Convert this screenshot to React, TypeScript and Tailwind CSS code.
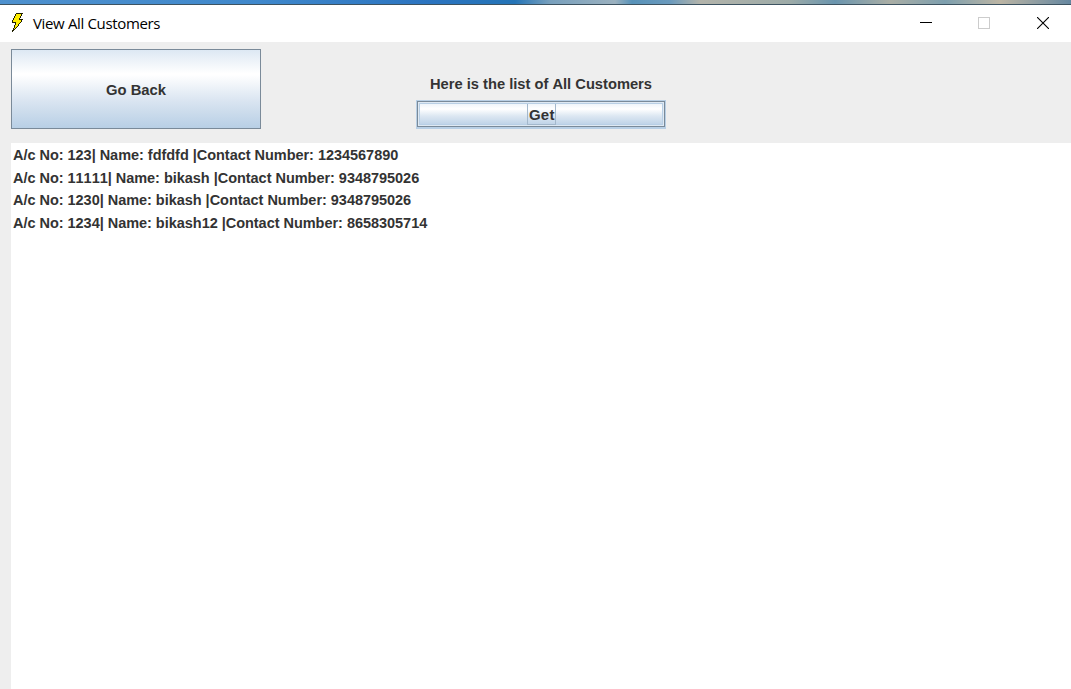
import React from "react";

const customers = [
  { account: "123", name: "fdfdfd", contact: "1234567890", height: "h-[23px]" },
  { account: "11111", name: "bikash", contact: "9348795026", height: "h-[22px]" },
  { account: "1230", name: "bikash", contact: "9348795026", height: "h-[23px]" },
  { account: "1234", name: "bikash12", contact: "8658305714", height: "h-[22px]" },
];

function Bolt() {
  return (
    <svg width="13" height="20" viewBox="0 0 13 20" shapeRendering="crispEdges" className="block">
      <path
        d="M5 1h5v2h-5zM4 3h5v2h-5zM3 5h5v2h-5zM2 7h8v2h-8zM5 9h4v1h-4zM5 10h3v1h-3zM5 11h2v1h-2zM4 12h3v1h-3zM4 13h2v1h-2zM4 14h1v1h-1zM3 15h1v1h-1z"
        fill="#ffed00"
      />
      <path
        d="M5 0h7v1h-7zM4 1h1v2h-1zM10 1h1v2h-1zM3 3h1v2h-1zM9 3h1v2h-1zM2 5h1v2h-1zM8 5h1v1h-1zM8 6h4v1h-4zM1 7h1v2h-1zM10 7h1v2h-1zM1 9h4v1h-4zM9 9h1v1h-1zM4 10h1v2h-1zM8 10h1v1h-1zM7 11h1v2h-1zM3 12h1v3h-1zM6 13h1v1h-1zM5 14h1v1h-1zM2 15h1v2h-1zM4 15h1v1h-1zM3 16h1v1h-1zM1 17h2v1h-2zM1 18h1v1h-1z"
        fill="#202000"
      />
    </svg>
  );
}

export default function App() {
  return (
    <div className="flex h-[689px] w-[1071px] flex-col overflow-hidden whitespace-nowrap bg-[#eeeeee] font-['Liberation_Sans',Arial,sans-serif] text-[15px] font-bold leading-5 text-[#333333] [font-kerning:none]">
      <div className="h-[5px] shrink-0 border-b border-[#3d5361] bg-[linear-gradient(90deg,#4e91ce_0px,#3f88cc_260px,#2b74c0_430px,#2474b7_515px,#78a0bd_550px,#9bb1bf_615px,#5792b9_632px,#6a9abd_670px,#b3b4ab_700px,#9daba8_790px,#6a95ae_835px,#aaaea5_890px,#7d9fae_945px,#bcb5a4_1000px,#6587a0_1071px)]" />
      <header className="flex h-[37px] shrink-0 items-start bg-white pl-[11px]">
        <div className="pt-[8px]"><Bolt /></div>
        <h1 className="pl-[9px] pt-[8px] font-['Open_Sans','Noto_Sans',sans-serif] text-[15px] font-normal tracking-[-0.35px] text-black">
          View All Customers
        </h1>
        <div className="ml-auto flex h-full items-start">
          <button aria-label="Minimize" className="w-[58px] pl-[7px] pt-[17px]"><div className="h-px w-3 bg-black" /></button>
          <button aria-label="Maximize" disabled className="w-[58px] pl-[7px] pt-[12px]"><div className="size-3 border border-[#cccccc]" /></button>
          <button aria-label="Close" className="w-[42px] pl-[8px] pt-[12px]">
            <svg width="12" height="12" viewBox="0 0 12 12" className="block"><path d="M0 0L12 12M12 0L0 12" stroke="black" strokeWidth="1.1" /></svg>
          </button>
        </div>
      </header>
      <section className="flex h-[101px] shrink-0 items-start pl-[11px] pt-[7px]">
        <button className="flex h-[80px] w-[250px] items-center justify-center border border-[#7a8a99] bg-[linear-gradient(180deg,#dde8f3_0%,#ffffff_30%,#ffffff_32%,#dae5f1_65%,#b8cfe5_100%)] pt-[2px] text-[14.8px]">
          Go Back
        </button>
        <div className="ml-[155px] flex flex-col pt-[25px]">
          <p className="h-[26px] pl-[14px] text-[14.7px]">Here is the list of All Customers</p>
          <button className="h-[29px] w-[250px] border-x border-t border-b-2 border-[#b8cfe5]">
            <div className="h-full border border-[#7a8a99] bg-[#dfe9f3] p-px">
              <div className="flex h-full items-start justify-center border border-[#b8cfe5] bg-[linear-gradient(180deg,#f0f5fa_0%,#ffffff_25%,#dce7f2_60%,#c0d4e8_100%)]">
                <div className="flex h-[21px] w-[29px] items-start border-x border-b border-[#a3b8cc] pl-[1.5px] pt-px tracking-[0.2px]">
                  Get
                </div>
              </div>
            </div>
          </button>
        </div>
      </section>
      <main className="ml-[11px] flex-1 bg-white pl-[2px] pt-[2px] text-[14.5px] tracking-[-0.03px]">
        <ul>
          {customers.map((customer) => (
            <li key={customer.account} className={customer.height}>
              {`A/c No: ${customer.account}| Name: ${customer.name} |Contact Number: ${customer.contact}`}
            </li>
          ))}
        </ul>
      </main>
    </div>
  );
}
